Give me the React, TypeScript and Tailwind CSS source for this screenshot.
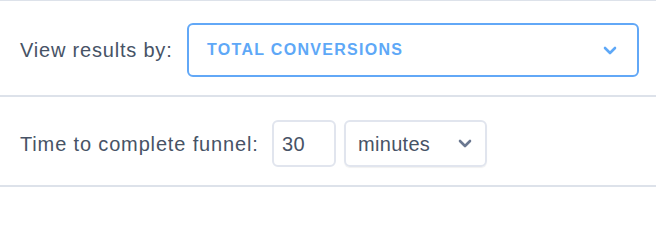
import React from "react";

function Chevron({ className }: { className: string }) {
  return (
    <svg viewBox="0 0 14 9" className={className} fill="none" stroke="currentColor" strokeWidth="2.6" strokeLinecap="round" strokeLinejoin="round">
      <path d="M2 2l5 5 5-5" />
    </svg>
  );
}

export default function App() {
  return (
    <div className="w-[656px] h-[230px] bg-white font-['Liberation_Sans',Arial,sans-serif] text-[#475366]">
      <div className="border-t border-[#dde2ea]" />
      <div className="flex items-center pl-5 pt-[22px] pb-[18px] border-b-2 border-[#dde2ea]">
        <span className="w-[151px] whitespace-nowrap text-[20px] tracking-[0.8px] mr-[16px]">View results by:</span>
        <div className="flex items-center justify-between w-[452px] h-[54px] border-2 border-[#62a8f7] rounded-[6px] pl-[18px] pr-[20px]">
          <span className="text-[16px] font-bold tracking-[1.3px] text-[#5ea8f7]">TOTAL CONVERSIONS</span>
          <Chevron className="w-[14px] h-[9px] text-[#5ea8f7]" />
        </div>
      </div>
      <div className="flex items-center pl-5 pt-[23px] pb-[18px] border-b-2 border-[#dde2ea]">
        <span className="w-[240px] whitespace-nowrap text-[20px] tracking-[0.85px] mr-[12px]">Time to complete funnel:</span>
        <div className="flex items-center w-[64px] h-[47px] border-2 border-[#e1e5ee] rounded-[6px] pl-[8px] text-[20px] tracking-[0.4px]">
          30
        </div>
        <div className="ml-2 flex items-center justify-between w-[143px] h-[47px] border-2 border-[#e1e5ee] rounded-[6px] pl-[12px] pr-[13px] shadow-[0_1px_1px_rgba(0,0,0,0.06)]">
          <span className="text-[20px] tracking-[0.3px]">minutes</span>
          <Chevron className="w-[14px] h-[9px] text-[#6b7890]" />
        </div>
      </div>
    </div>
  );
}
